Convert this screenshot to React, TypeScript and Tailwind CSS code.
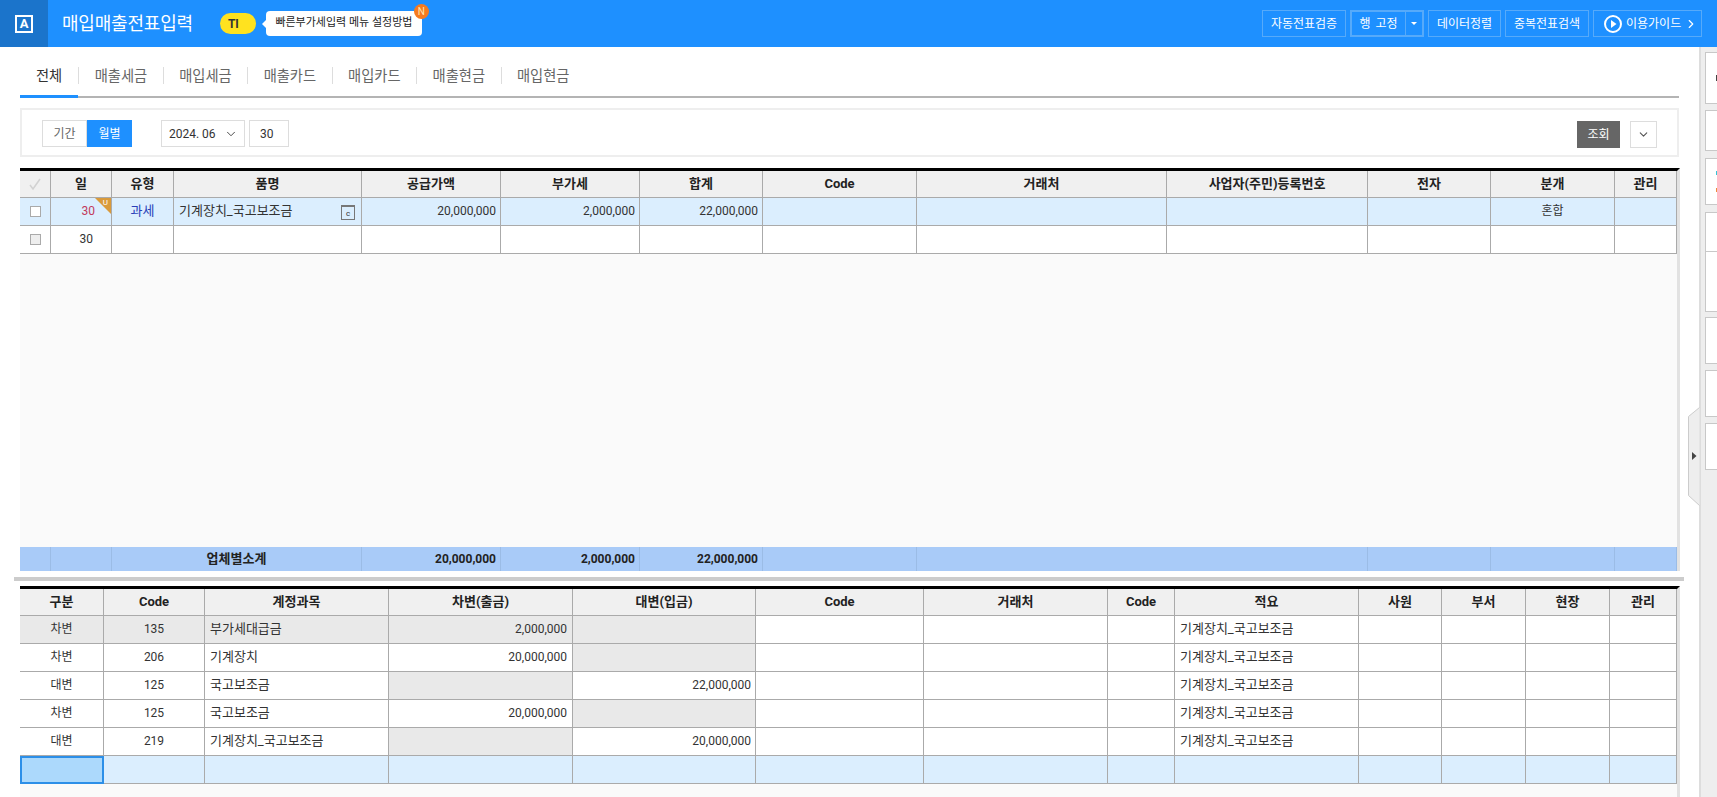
import { ChevronDown, ChevronRight } from "lucide-react";

const tabs = ["전체", "매출세금", "매입세금", "매출카드", "매입카드", "매출현금", "매입현금"];

const topCols = ["w-[31px]", "w-[61px]", "w-[62px]", "w-[188px]", "w-[139px]", "w-[139px]", "w-[123px]", "w-[154px]", "w-[250px]", "w-[201px]", "w-[123px]", "w-[124px]", "w-[62px]"];
const topHeads = ["일", "유형", "품명", "공급가액", "부가세", "합계", "Code", "거래처", "사업자(주민)등록번호", "전자", "분개", "관리"];

const bottomCols = ["w-[84px]", "w-[101px]", "w-[184px]", "w-[184px]", "w-[183px]", "w-[168px]", "w-[184px]", "w-[67px]", "w-[184px]", "w-[83px]", "w-[84px]", "w-[84px]", "w-[67px]"];
const bottomHeads = ["구분", "Code", "계정과목", "차변(출금)", "대변(입금)", "Code", "거래처", "Code", "적요", "사원", "부서", "현장", "관리"];

const journal = [
  { kind: "차변", code: "135", name: "부가세대급금", debit: "2,000,000", credit: "", first: true },
  { kind: "차변", code: "206", name: "기계장치", debit: "20,000,000", credit: "" },
  { kind: "대변", code: "125", name: "국고보조금", debit: "", credit: "22,000,000" },
  { kind: "차변", code: "125", name: "국고보조금", debit: "20,000,000", credit: "" },
  { kind: "대변", code: "219", name: "기계장치_국고보조금", debit: "", credit: "20,000,000" },
];

const sideCards = [
  { cls: "mt-[5px] h-[52px]", dots: ["h-[6px] bg-[#444]"] },
  { cls: "mt-[6px] h-[41px]", dots: [] },
  { cls: "mt-[7px] h-[47px]", dots: ["h-[4px] bg-[#35c5d8]", "h-[4px] bg-[#f08a3c]"] },
  { cls: "mt-[7px] h-[100px]", dots: [], split: true },
  { cls: "mt-[5px] h-[47px]", dots: [] },
  { cls: "mt-[6px] h-[47px]", dots: [] },
  { cls: "mt-[6px] h-[47px]", dots: [] },
];

const cell = "px-0 pt-0 pb-[2px] border-r border-b border-[#aaaaaa]";
const head = "p-0 border-r border-b border-[#aaaaaa] bg-[#f0f0f0] text-center text-[13px] font-bold text-[#222]";
const blueCell = `${cell} bg-[#dbeefe]`;

const HeaderButton = ({ label, className }: { label: string; className: string }) => (
  <button className={`h-[27px] border border-[#56aafa] text-[12px] text-white ${className}`}>{label}</button>
);

const App = () => {
  return (
    <div className="flex h-[797px] w-[1717px] flex-col overflow-hidden bg-white font-['Roboto','Noto_Sans_CJK_KR',sans-serif] text-[#333]">
      {/* top bar */}
      <header className="flex h-[47px] shrink-0 items-center bg-[#1e90ff] text-white">
        <div className="flex h-full w-[48px] items-center justify-center bg-[#1b74cb]">
          <span className="flex h-[18px] w-[18px] items-center justify-center border-2 border-white text-[13px] font-bold leading-none">A</span>
        </div>
        <h1 className="ml-[14px] text-[18px] font-normal leading-none tracking-[-0.2px]">매입매출전표입력</h1>
        <span className="ml-[27px] flex h-[21px] w-[36px] items-center rounded-full bg-[#ffe21f] pl-[8px] text-[12px] font-bold text-[#333]">TI</span>
        <div className="relative ml-[10px] flex h-[25px] w-[156px] items-center justify-center rounded-[4px] bg-white text-[11px] text-[#222]">
          빠른부가세입력 메뉴 설정방법
          <span className="absolute -left-[4px] top-[9px] h-0 w-0 border-y-[4px] border-r-[4px] border-y-transparent border-r-white" />
          <span className="absolute -right-[7px] -top-[7px] flex h-[15px] w-[15px] items-center justify-center rounded-full bg-[#f57a1f] text-[10px] text-[#ffe6b0]">N</span>
        </div>
        <div className="ml-auto mr-[15px] flex items-center gap-[4px]">
          <HeaderButton label="자동전표검증" className="w-[84px]" />
          <div className="flex h-[27px] w-[74px] border-2 border-[#56aafa] text-[12px]">
            <span className="flex w-[54px] items-center justify-center border-r border-[#56aafa] [word-spacing:2px]">행 고정</span>
            <span className="flex flex-1 items-center justify-center">
              <span className="h-0 w-0 border-x-[3px] border-t-[3px] border-x-transparent border-t-white" />
            </span>
          </div>
          <HeaderButton label="데이터정렬" className="w-[73px]" />
          <HeaderButton label="중복전표검색" className="w-[84px]" />
          <div className="flex h-[27px] w-[109px] items-center border border-[#56aafa] pl-[10px] text-[12px]">
            <svg width="18" height="18" viewBox="0 0 18 18" fill="none">
              <circle cx="9" cy="9" r="8" stroke="white" strokeWidth="2" />
              <path d="M7 5l5.5 4L7 13z" fill="white" />
            </svg>
            <span className="ml-[4px]">이용가이드</span>
            <ChevronRight size={14} strokeWidth={2} className="ml-[3px]" />
          </div>
        </div>
      </header>

      <div className="flex flex-1">
        <main className="relative w-[1699px] pl-5">
          {/* tabs */}
          <nav className="flex h-[51px] w-[1659px] items-center border-b-2 border-[#b4b4b4] pt-2">
            {tabs.map((tab, i) => (
              <div key={tab} className="flex h-full items-center">
                {i > 0 && <span className="h-[17px] w-px bg-[#dddddd]" />}
                {i === 0 ? (
                  <span className="-mb-0.5 -mt-2 flex h-[calc(100%+10px)] items-center border-b-[3px] border-[#1e90ff] px-4 pt-[11px] text-[14.25px] text-[#333]">{tab}</span>
                ) : (
                  <span className="px-[15.5px] pt-[3px] text-[14.25px] text-[#666]">{tab}</span>
                )}
              </div>
            ))}
          </nav>

          {/* filter */}
          <section className="mt-[10px] flex h-[49px] w-[1659px] border-2 border-[#eeeeee] pl-5 pr-[20px] pt-[10px] text-[12px]">
            <button className="h-[27px] w-[45px] border border-[#dddddd] pt-px text-[#666]">기간</button>
            <button className="h-[27px] w-[45px] bg-[#1e90ff] pt-px text-white">월별</button>
            <div className="ml-[29px] flex h-[27px] w-[84px] items-center justify-between border border-[#dddddd] pl-[7px] pr-[6px]">
              <span>2024. 06</span>
              <ChevronDown size={14} strokeWidth={1.5} />
            </div>
            <div className="ml-[4px] flex h-[27px] w-[40px] items-center border border-[#dddddd] pl-[10px]">30</div>
            <button className="ml-auto mt-px h-[27px] w-[43px] bg-[#666666] text-white">조회</button>
            <div className="ml-[10px] mt-px flex h-[27px] w-[27px] items-center justify-center border border-[#dddddd]">
              <ChevronDown size={13} strokeWidth={2} className="text-[#555]" />
            </div>
          </section>

          {/* invoice grid */}
          <section className="mt-[11px] flex h-[403px] w-[1660px] flex-col border-t-[3px] border-r-[3px] border-t-black border-r-[#e2e2e2] bg-[#fafafa]">
            <table className="w-[1657px] table-fixed border-separate border-spacing-0">
              <colgroup>
                {topCols.map((c, i) => (
                  <col key={i} className={c} />
                ))}
              </colgroup>
              <thead>
                <tr className="h-[27px]">
                  <th className={head}>
                    <svg width="14" height="14" viewBox="0 0 14 14" fill="none" className="mx-auto">
                      <path d="M2 8l3 4 7-10" stroke="#d2d2d2" strokeWidth="1.6" />
                    </svg>
                  </th>
                  {topHeads.map((h, i) => (
                    <th key={i} className={head}>{h}</th>
                  ))}
                </tr>
              </thead>
              <tbody>
                <tr className="h-7 text-[13px]">
                  <td className={blueCell}>
                    <span className="mx-auto mt-[2px] block h-[11px] w-[11px] border border-[#aaaaaa] bg-white" />
                  </td>
                  <td className={`${blueCell} relative pr-4 text-right text-[12px] text-[#c2395c]`}>
                    30
                    <span className="absolute right-0 top-0 h-0 w-0 border-l-[16px] border-t-[16px] border-l-transparent border-t-[#d99a3b]" />
                    <span className="absolute right-[3px] top-0 text-[8px] leading-[9px] text-white">U</span>
                  </td>
                  <td className={`${blueCell} text-center text-[#2a3fb8]`}>과세</td>
                  <td className={`${blueCell} relative pl-[5px]`}>
                    기계장치_국고보조금
                    <span className="absolute right-[6px] top-[7px] flex h-[15px] w-[14px] items-end justify-center border border-t-2 border-[#777] text-[8px] leading-[10px]">c</span>
                  </td>
                  <td className={`${blueCell} pr-[4px] text-right text-[12px]`}>20,000,000</td>
                  <td className={`${blueCell} pr-[4px] text-right text-[12px]`}>2,000,000</td>
                  <td className={`${blueCell} pr-[4px] text-right text-[12px]`}>22,000,000</td>
                  <td className={blueCell} />
                  <td className={blueCell} />
                  <td className={blueCell} />
                  <td className={blueCell} />
                  <td className={`${blueCell} text-center text-[12px]`}>혼합</td>
                  <td className={blueCell} />
                </tr>
                <tr className="h-7 bg-white text-[12px]">
                  <td className={cell}>
                    <span className="mx-auto mt-[2px] block h-[11px] w-[11px] border border-[#aaaaaa] bg-[#eeeeee]" />
                  </td>
                  <td className={`${cell} pr-[18px] text-right`}>30</td>
                  {Array.from({ length: 11 }).map((_, i) => (
                    <td key={i} className={cell} />
                  ))}
                </tr>
              </tbody>
            </table>
            <div className="flex-1" />
            <table className="w-[1657px] table-fixed border-separate border-spacing-0 bg-[#a9cbf8] text-[13px] font-bold text-[#222]">
              <colgroup>
                {topCols.map((c, i) => (
                  <col key={i} className={c} />
                ))}
              </colgroup>
              <tbody>
                <tr className="h-6 [&>td]:border-y-0 [&>td]:border-l-0 [&>td]:border-r [&>td]:border-[#9bbce6] [&>td]:p-0">
                  <td />
                  <td />
                  <td colSpan={2} className="text-center">업체별소계</td>
                  <td className="!pr-[4px] text-right text-[12px]">20,000,000</td>
                  <td className="!pr-[4px] text-right text-[12px]">2,000,000</td>
                  <td className="!pr-[4px] text-right text-[12px]">22,000,000</td>
                  <td />
                  <td colSpan={2} />
                  <td />
                  <td />
                  <td />
                </tr>
              </tbody>
            </table>
          </section>

          {/* splitter */}
          <div className="-ml-[6px] mt-[6px] h-[4px] w-[1670px] bg-[#cccccc]" />

          {/* journal grid */}
          <section className="mt-[5px] h-[211px] w-[1660px] border-t-[3px] border-r-[3px] border-t-black border-r-[#e2e2e2] bg-[#fafafa]">
            <table className="w-[1657px] table-fixed border-separate border-spacing-0">
              <colgroup>
                {bottomCols.map((c, i) => (
                  <col key={i} className={c} />
                ))}
              </colgroup>
              <thead>
                <tr className="h-[27px]">
                  {bottomHeads.map((h, i) => (
                    <th key={i} className={head}>{h}</th>
                  ))}
                </tr>
              </thead>
              <tbody>
                {journal.map((row, i) => (
                  <tr key={i} className="h-7 bg-white text-[13px]">
                    <td className={`${cell} text-center text-[12px] ${row.first ? "bg-[#e9e9e9]" : ""}`}>{row.kind}</td>
                    <td className={`${cell} text-center text-[12px] ${row.first ? "bg-[#e9e9e9]" : ""}`}>{row.code}</td>
                    <td className={`${cell} pl-[5px] ${row.first ? "bg-[#e9e9e9]" : ""}`}>{row.name}</td>
                    <td className={`${cell} pr-[5px] text-right text-[12px] ${row.debit ? (row.first ? "bg-[#e9e9e9]" : "") : "bg-[#e9e9e9]"}`}>{row.debit}</td>
                    <td className={`${cell} pr-[4px] text-right text-[12px] ${row.credit ? "" : "bg-[#e9e9e9]"}`}>{row.credit}</td>
                    <td className={cell} />
                    <td className={cell} />
                    <td className={cell} />
                    <td className={`${cell} pl-[5px]`}>기계장치_국고보조금</td>
                    <td className={cell} />
                    <td className={cell} />
                    <td className={cell} />
                    <td className={cell} />
                  </tr>
                ))}
                <tr className="h-7">
                  <td className="border-2 border-[#2c8fe8] bg-[#acd9fc] p-0" />
                  {Array.from({ length: 12 }).map((_, i) => (
                    <td key={i} className={blueCell} />
                  ))}
                </tr>
              </tbody>
            </table>
          </section>

          {/* collapse handle */}
          <svg width="12" height="100" viewBox="0 0 12 100" className="absolute left-[1688px] top-[360px]">
            <path d="M11.5 .5L.5 9.5V88.5L11.5 98.5" fill="#eeeeee" stroke="#cccccc" />
            <path d="M4 45l4.5 4-4.5 4z" fill="#444444" />
          </svg>
        </main>

        {/* side panel */}
        <aside className="flex flex-1 flex-col border-l-2 border-[#dddddd] bg-[#eeeeee] pl-[4px]">
          {sideCards.map((card, i) => (
            <div key={i} className={`relative flex flex-col items-end justify-center gap-[13px] border border-r-0 border-[#c8c8c8] bg-white ${card.cls}`}>
              {card.dots.map((dot, j) => (
                <span key={j} className={`w-px ${dot}`} />
              ))}
              {card.split && <span className="absolute left-0 right-0 top-[38px] h-px bg-[#c8c8c8]" />}
            </div>
          ))}
        </aside>
      </div>
    </div>
  );
};

export default App;
